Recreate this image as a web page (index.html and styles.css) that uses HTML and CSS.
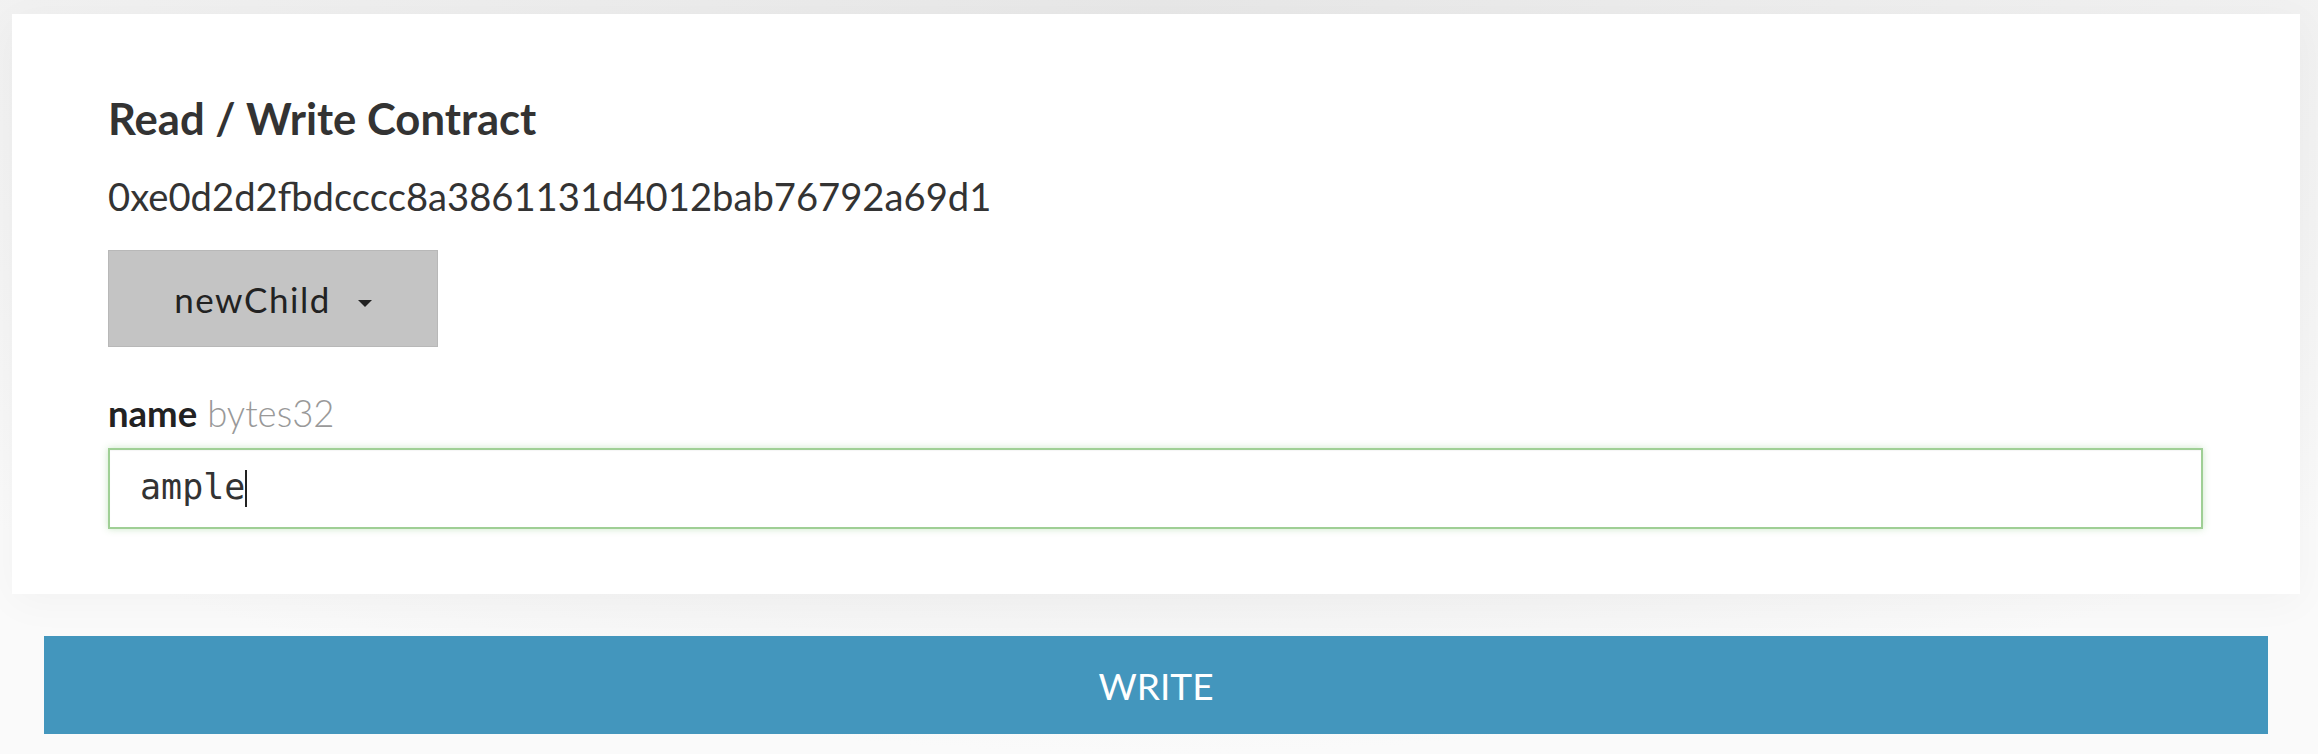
FILE: index.html
```html
<!DOCTYPE html>
<html lang="en">
<head>
<meta charset="utf-8">
<title>Read / Write Contract</title>
<link rel="stylesheet" href="styles.css">
</head>
<body>
<div class="page">
  <section class="card">
    <h2 class="title">Read / Write Contract</h2>
    <div class="address">0xe0d2d2fbdcccc8a3861131d4012bab76792a69d1</div>
    <button class="dropdown" type="button"><span class="dropdown-label">newChild</span><span class="caret"></span></button>
    <div class="field">
      <label class="label"><span class="label-name">name</span><span class="label-type">bytes32</span></label>
      <div class="input"><span class="input-value">ample</span><span class="cursor"></span></div>
    </div>
  </section>
  <button class="write" type="button">WRITE</button>
</div>
</body>
</html>
```
FILE: styles.css
```css
html, body {
  margin: 0;
  height: 100%;
}
body {
  font-family: "Lato", "Noto Sans", sans-serif;
  color: #333;
  background: radial-gradient(ellipse 70% 100% at 50% 0%, #e7e7e7 0%, #f1f1f1 70%, #fafafa 100%);
  background-color: #fafafa;
}
.page {
  display: flex;
  flex-direction: column;
  min-height: 754px;
  box-sizing: border-box;
}
.card {
  margin: 14px 18px 0 12px;
  padding: 78px 97px 65px 96px;
  background: #fff;
  box-shadow: 0 8px 40px rgba(0, 0, 0, 0.035);
  display: flex;
  flex-direction: column;
  align-items: flex-start;
}
.title {
  margin: 0;
  font-size: 43.6px;
  line-height: 52px;
  font-weight: 700;
  color: #333;
}
.address {
  margin-top: 29px;
  font-size: 38.2px;
  line-height: 46px;
  color: #333;
}
.dropdown {
  margin-top: 31px;
  width: 330px;
  height: 97px;
  box-sizing: border-box;
  background: #c4c4c4;
  border: 1px solid #b8b8b8;
  border-radius: 0;
  padding: 0;
  display: flex;
  align-items: center;
  justify-content: center;
  font-family: "Lato", sans-serif;
  font-size: 35px;
  letter-spacing: 1.5px;
  color: #222;
}
.caret {
  margin-left: 27px;
  margin-top: 10px;
  width: 0;
  height: 0;
  border-left: 7.5px solid transparent;
  border-right: 7.5px solid transparent;
  border-top: 7px solid #222;
}
.field {
  align-self: stretch;
  margin-top: 46px;
  display: flex;
  flex-direction: column;
}
.label {
  display: flex;
  align-items: baseline;
  line-height: 41px;
}
.label-name {
  font-size: 36.5px;
  font-weight: 700;
  color: #222;
}
.label-type {
  margin-left: 10px;
  font-size: 36.5px;
  font-weight: 300;
  color: #999;
}
.input {
  margin-top: 14px;
  height: 81px;
  box-sizing: border-box;
  border: 2px solid #9fcf95;
  box-shadow: 0 0 7px rgba(140, 200, 130, 0.45), inset 0 1px 1px rgba(0, 0, 0, 0.04);
  padding-left: 30px;
  display: flex;
  align-items: center;
  background: #fff;
}
.input-value {
  font-family: "DejaVu Sans Mono", "Liberation Mono", monospace;
  font-size: 35px;
  line-height: 1;
  color: #333;
  margin-bottom: 3px;
}
.cursor {
  width: 1.5px;
  height: 37px;
  background: #222;
}
.write {
  margin: 42px 50px 0 44px;
  height: 98px;
  border: none;
  border-radius: 0;
  background: #4396bd;
  color: #fff;
  font-family: "Lato", sans-serif;
  font-size: 37px;
  font-weight: 400;
  padding: 0;
}
```
